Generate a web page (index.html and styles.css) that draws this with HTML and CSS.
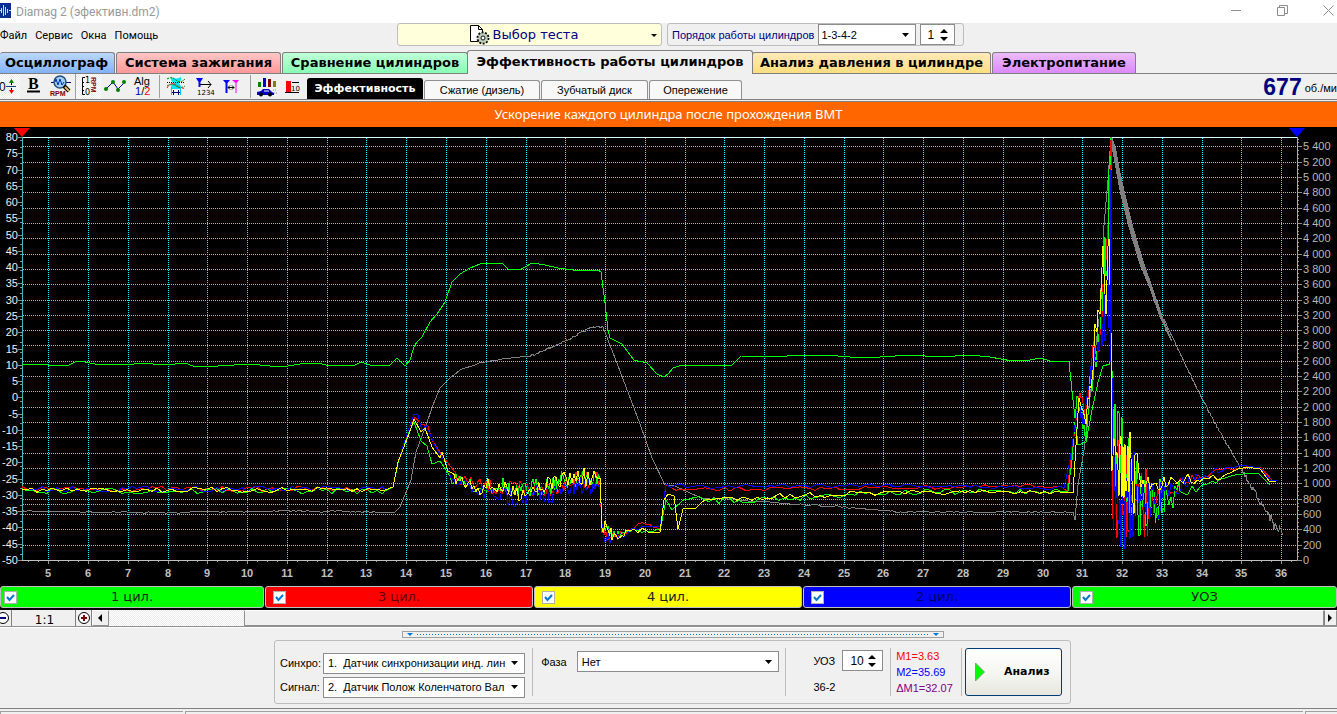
FILE: index.html
```html
<!DOCTYPE html>
<html lang="ru">
<head>
<meta charset="utf-8">
<title>Diamag 2</title>
<link rel="stylesheet" href="styles.css">
</head>
<body>
<div class="app">
  <header class="titlebar">
    <svg class="app-icon" width="11" height="15" viewBox="0 0 11 15" aria-hidden="true">
      <rect width="11" height="15" fill="#0b2f8f"/>
      <path d="M0 7.500h1M1.500 5v5M3.500 2v11M5.500 4v8M7.500 6v4M9 7.500h2" fill="none" stroke="#bfe2ff"/>
    </svg>
    <span class="title">Diamag 2 (эфективн.dm2)</span>
    <button class="win-btn" aria-label="Свернуть"><svg width="11" height="11" viewBox="0 0 11 11"><path d="M0 5.500h10" stroke="#8c8c8c"/></svg></button>
    <button class="win-btn" aria-label="Развернуть"><svg width="11" height="11" viewBox="0 0 11 11"><path d="M.5 2.500h7v8h-7zM2.500 2.500v-2h8v8h-3" fill="none" stroke="#8c8c8c"/></svg></button>
    <button class="win-btn" aria-label="Закрыть"><svg width="11" height="11" viewBox="0 0 11 11"><path d="M.5.5l10 10M10.500.5l-10 10" stroke="#8c8c8c"/></svg></button>
  </header>

  <div class="menu-row">
    <nav class="menu">
      <button>Файл</button><button>Сервис</button><button>Окна</button><button>Помощь</button>
    </nav>
    <button class="test-picker">
      <svg width="21" height="21" viewBox="0 0 21 21" aria-hidden="true">
        <path d="M1.500 1.500h8l4 4v12h-12z" fill="#fff" stroke="#000"/><path d="M9.500 1.500v4h4" fill="none" stroke="#000"/>
        <circle cx="14" cy="14" r="5.500" fill="#b9cdb9" stroke="#111" stroke-width="2" stroke-dasharray="2 1.400"/>
        <circle cx="14" cy="14" r="4.500" fill="#b9cdb9"/><circle cx="14" cy="14" r="2" fill="#fff" stroke="#111"/>
      </svg>
      <span>Выбор теста</span>
      <i class="drop"></i>
    </button>
    <div class="order">
      <label for="order">Порядок работы цилиндров</label>
      <select id="order"><option>1-3-4-2</option></select>
      <span class="spin"><input id="first" type="text" value="1" aria-label="Первый цилиндр"><svg width="8" height="14" viewBox="0 0 8 14"><path d="M0 5l4-4 4 4zM0 9l4 4 4-4z"/></svg></span>
    </div>
  </div>

  <nav class="tabs">
    <button class="tab tab-blue">Осциллограф</button>
    <button class="tab tab-red">Система зажигания</button>
    <button class="tab tab-green">Сравнение цилиндров</button>
    <button class="tab tab-active">Эффективность работы цилиндров</button>
    <button class="tab tab-amber">Анализ давления в цилиндре</button>
    <button class="tab tab-violet">Электропитание</button>
  </nav>

  <div class="toolbar">
    <div class="tools">
      <button class="tool pressed first" aria-label="Нуль"><svg width="20" height="24" viewBox="0 0 20 24"><text x="-1" y="17" class="pix">0</text><path d="M6 12.500h10" stroke="#104080"/><path d="M11.500 7v4M11.500 14v4" stroke="#000"/><path d="M9 9l2.500-4L14 9z" fill="#008000"/><path d="M9 16l2.500 4 2.500-4z" fill="red"/></svg></button>
      <button class="tool" aria-label="Жирный"><svg width="27" height="24" viewBox="0 0 27 24"><text x="8" y="15" class="bold-b">B</text><path d="M7 17.500h13" stroke="#000" stroke-width="2"/></svg></button>
      <button class="tool" aria-label="Обороты"><svg width="28" height="24" viewBox="0 0 28 24"><path d="M4 8.500h20" stroke="#000080"/><circle cx="13" cy="8" r="6" fill="#9fd0f4" stroke="#285080" stroke-width="1.500"/><path d="M8 8l1-3 2 6 2-6 2 6 2-3" fill="none" stroke="#0030b0"/><path d="M17 12l5 5" stroke="#000" stroke-width="4"/><path d="M18 13l4 4" stroke="#e8c060" stroke-width="2"/><text x="3" y="22" class="rpm">RPM</text></svg></button>
      <button class="tool pressed" aria-label="Шкала оборотов"><svg width="25" height="24" viewBox="0 0 25 24"><path d="M9 3.500H6.500v17H9M6 8.500h2M6 12.500h2M6 16.500h2" fill="none" stroke="#000"/><text x="9" y="9" class="tiny">1</text><text x="9" y="21" class="tiny">0</text><text class="rpm" transform="translate(15 3) rotate(90)">RPM</text></svg></button>
      <button class="tool" aria-label="Точки"><svg width="28" height="24" viewBox="0 0 28 24"><path d="M5 15l7-7 5 7 7-7" fill="none" stroke="#0000a0"/><g fill="#008000"><circle cx="5" cy="15" r="2"/><circle cx="12" cy="8" r="2"/><circle cx="17" cy="16" r="2"/><circle cx="23" cy="8" r="2"/></g></svg></button>
      <button class="tool" aria-label="Алгоритм"><svg width="28" height="24" viewBox="0 0 28 24"><text x="5" y="11" class="alg">Alg</text><text x="6" y="21" class="alg"><tspan fill="#0000a0">1</tspan>/<tspan fill="red">2</tspan></text></svg></button>
      <i class="sep"></i>
      <button class="tool" aria-label="Наложение"><svg width="32" height="24" viewBox="0 0 32 24"><path d="M9 3q5 3 10 0v3l-2 3 2 3v3H9v-3l2-3-2-3z" fill="#00e5f0"/><path d="M5 5q5-3 9 1t9-1M5 12q5-3 9 0t9 0" fill="none" stroke="#008000" stroke-dasharray="2 1"/><path d="M5 8.500h18" stroke="#000" stroke-dasharray="1 1"/><path d="M5 14q4-7 9-3t9 3" fill="none" stroke="red" stroke-dasharray="2 1"/><path d="M9.500 13v8M18.500 13v8" stroke="#00c8e0"/><path d="M10 18.500h8M11.500 16v5M16.500 16v5" stroke="#000080"/></svg></button>
      <button class="tool" aria-label="Метки цилиндров"><svg width="28" height="24" viewBox="0 0 28 24"><path d="M2 4h7L6.500 8v5h-2V8z" fill="#00f"/><path d="M6 10.500h11" stroke="#000"/><path d="M14 7l3 3.500-3 3.500" fill="none" stroke="#000"/><text x="3" y="21" class="count">1234</text></svg></button>
      <button class="tool" aria-label="Между метками"><svg width="26" height="24" viewBox="0 0 26 24"><path d="M1 6h7L5.500 9v10h-2V9z" fill="#00f"/><path d="M10 6h7l-2.500 3v10h-1V9z" fill="#f0f"/><path d="M6 13.500h6M8 11.500l-2 2 2 2M10 11.500l2 2-2 2" fill="none" stroke="#000"/></svg></button>
      <i class="sep"></i>
      <button class="tool" aria-label="Автомобиль"><svg width="28" height="24" viewBox="0 0 28 24"><path d="M5 8h3v5H5z" fill="#008000"/><path d="M10 4h3v9h-3z" fill="#0000c0"/><path d="M15 5h3v8h-3z" fill="#800000"/><path d="M20 7h3v6h-3z" fill="#808000"/><path d="M4 18l4-1 2-2h6l3 3 2 1v2H4z" fill="#0000c8"/><path d="M11 17h5" stroke="#fff"/><circle cx="8" cy="20.500" r="2"/><circle cx="17" cy="20.500" r="2"/><path d="M20 16h4M21 19h3" stroke="#909090" stroke-dasharray="1 1"/></svg></button>
      <button class="tool" aria-label="Десять"><svg width="24" height="24" viewBox="0 0 24 24"><path d="M5 7h5v11H5z" fill="red"/><path d="M4 18.500h14M11 8.500h7" stroke="#000"/><text x="10" y="17" class="count">10</text></svg></button>
    </div>
    <nav class="subtabs">
      <button class="sub sub-active">Эффективность</button>
      <button class="sub">Сжатие (дизель)</button>
      <button class="sub">Зубчатый диск</button>
      <button class="sub">Опережение</button>
    </nav>
    <div class="rpm-read"><strong>677</strong><span>об./мин</span></div>
  </div>

  <h1 class="banner">Ускорение каждого цилиндра после прохождения ВМТ</h1>

  <main class="scope">
    <svg id="chart" class="chart" viewBox="0 127 1337 458" role="img" aria-label="Ускорение цилиндров"></svg>
    <div class="channels">
      <label class="ch ch-green"><input type="checkbox" checked><span>1 цил.</span></label>
      <label class="ch ch-red"><input type="checkbox" checked><span>3 цил.</span></label>
      <label class="ch ch-yellow"><input type="checkbox" checked><span>4 цил.</span></label>
      <label class="ch ch-blue"><input type="checkbox" checked><span>2 цил.</span></label>
      <label class="ch ch-green"><input type="checkbox" checked><span>УОЗ</span></label>
    </div>
  </main>

  <div class="scroll-row">
    <button class="zoom zoom-out" aria-label="Уменьшить"><svg width="14" height="14" viewBox="0 0 14 14"><circle cx="7" cy="7" r="5.500" fill="#fff" stroke="#000"/><path d="M4 7h6" stroke="#000080" stroke-width="2"/></svg></button>
    <output class="ratio">1:1</output>
    <button class="zoom" aria-label="Увеличить"><svg width="14" height="14" viewBox="0 0 14 14"><circle cx="7" cy="7" r="5.500" fill="#fff" stroke="#000"/><path d="M4 7h6M7 4v6" stroke="#800000" stroke-width="2"/></svg></button>
    <button class="arrow" aria-label="Влево"><svg width="5" height="8" viewBox="0 0 5 8"><path d="M4 0v8L0 4z"/></svg></button>
    <div class="track"><div class="thumb"></div></div>
    <button class="arrow arrow-right" aria-label="Вправо"><svg width="5" height="8" viewBox="0 0 5 8"><path d="M0 0v8l4-4z"/></svg></button>
  </div>

  <section class="bottom">
    <div class="splitter"><i></i><b></b><i></i></div>
    <form class="panel">
      <div class="sources">
        <label for="sync">Синхро:</label>
        <select id="sync"><option>1.&nbsp; Датчик синхронизации инд. лин</option></select>
        <label for="signal">Сигнал:</label>
        <select id="signal"><option>2.&nbsp; Датчик Полож Коленчатого Вал</option></select>
      </div>
      <div class="phase">
        <label for="phase">Фаза</label>
        <select id="phase"><option>Нет</option></select>
      </div>
      <div class="timing">
        <label for="uoz">УОЗ</label>
        <span class="spin"><input id="uoz" type="text" value="10"><svg width="8" height="14" viewBox="0 0 8 14"><path d="M0 5l4-4 4 4zM0 9l4 4 4-4z"/></svg></span>
        <span class="disc">36-2</span>
      </div>
      <div class="marks">
        <span class="m1">М1=3.63</span>
        <span class="m2">М2=35.69</span>
        <span class="dm">ΔМ1=32.07</span>
      </div>
      <div class="run">
        <button type="button" class="analyze"><svg width="11" height="20" viewBox="0 0 11 20"><path d="M.5 1v18l9-9z" fill="#0f0" stroke="#80a080"/></svg><span>Анализ</span></button>
      </div>
    </form>
  </section>
  <footer class="status"><span></span><span></span><span></span></footer>
</div>
<script src="chart.js"></script>
</body>
</html>
```
FILE: styles.css
```css
* { box-sizing: border-box; }
body { margin: 0; overflow-x: hidden; background: #f0f0f0; color: #000; font: 11px/14px "Liberation Sans", Arial, sans-serif; }
button, input, select { font: inherit; color: inherit; margin: 0; padding: 0; border: 0; border-radius: 0; background: none; }
.app { display: flex; flex-direction: column; min-height: 100vh; overflow: hidden; }

.titlebar { display: flex; align-items: center; height: 23px; padding-bottom: 2px; background: #fff; color: #999; font: 12px/16px Roboto, sans-serif; }
.title { flex: 1; padding: 2px 0 0 5px; }
.win-btn { width: 46px; height: 20px; display: flex; align-items: center; justify-content: center; }
.win-btn:last-child { width: 32px; padding-left: 14px; }

.menu-row { display: flex; align-items: flex-start; height: 27px; gap: 5px; }
.menu { flex: 0 0 392px; display: flex; gap: 8px; padding-top: 5px; font: 11px/16px Roboto, sans-serif; }
.test-picker { flex: 0 0 265px; height: 23px; display: flex; align-items: center; justify-content: center; gap: 3px; border: 1px solid #bdbdbd; border-radius: 3px; background: #ffffdc; color: #000080; font: 13px/18px "DejaVu Sans", sans-serif; position: relative; }
.test-picker span { padding-right: 12px; }
.drop { position: absolute; right: 4px; top: 10px; border: 3px solid transparent; border-top-color: #000; border-bottom: 0; }
.order { height: 23px; display: flex; align-items: center; gap: 4px; padding: 0 8px 0 4px; border: 1px solid #bdbdbd; border-radius: 3px; color: #000080; }
.order select { width: 98px; height: 21px; padding-left: 2px; }
.order label { white-space: nowrap; }
select { appearance: none; height: 21px; padding: 0 16px 0 4px; border: 1px solid #8c8c8c; color: #000; background: #fff url("data:image/svg+xml,%3Csvg xmlns='http://www.w3.org/2000/svg' width='7' height='4'%3E%3Cpath d='M0 0h7L3.500 4z'/%3E%3C/svg%3E") no-repeat right 6px center; text-overflow: clip; }
.spin { display: inline-flex; align-items: center; width: 35px; height: 21px; border: 1px solid #8c8c8c; background: #fff; color: #000; }
.spin input { flex: 1; min-width: 0; padding-left: 6px; font-size: 12px; }
.spin svg { flex: none; margin-right: 6px; }

.tabs { display: flex; align-items: flex-end; height: 24px; gap: 1px; border-bottom: 1px solid #808080; }
.tab { height: 21px; padding: 0 4px; border: 1px solid #808080; border-bottom: 0; border-radius: 3px 3px 0 0; font: bold 13px/18px "DejaVu Sans", sans-serif; white-space: nowrap; }
.tab-blue { width: 115px; padding: 0 0 0 5px; border-left: 0; background: linear-gradient(#bcd8ff, #82b2fa); text-align: left; }
.tab-red { width: 165px; background: linear-gradient(#ffc6c6, #ff9898); }
.tab-green { width: 186px; background: linear-gradient(#c0ffd8, #88ffb4); }
.tab-active { width: 286px; height: 24px; margin: 0 -2px -1px; padding-bottom: 2px; background: #f0f0f0; }
.tab-amber { width: 239px; background: linear-gradient(#ffeab8, #ffde80); }
.tab-violet { width: 144px; background: linear-gradient(#ecbcff, #dc88ff); }

.toolbar { display: flex; align-items: flex-end; height: 26px; border-bottom: 1px solid #808080; }
.tools { display: flex; align-items: center; width: 307px; height: 25px; }
.tool { display: flex; height: 25px; }
.pressed { background: repeating-conic-gradient(#fff 0 25%, #ececec 0 50%) 0 0 / 2px 2px; border-left: 1px solid #a0a0a0; }
.first { border-left: 0; }
.sep { width: 1px; height: 23px; background: #a0a0a0; margin: 0 2px; }
.pix { font: 12px "Liberation Sans", sans-serif; }
.bold-b { font: bold 16px "Liberation Serif", serif; }
.rpm { font: bold 7px "Liberation Sans", sans-serif; fill: #800000; }
.tiny { font: 8px "DejaVu Sans", sans-serif; }
.count { font: 7px "DejaVu Sans", sans-serif; }
.alg { font: 11px "Liberation Sans", sans-serif; }
.subtabs { display: flex; align-items: flex-end; gap: 1px; }
.sub { height: 19px; border: 1px solid #909090; border-bottom: 0; border-radius: 3px 3px 0 0; background: #f8f8f8; white-space: nowrap; }
.sub:nth-child(1) { width: 116px; }
.sub:nth-child(2) { width: 116px; }
.sub:nth-child(3) { width: 107px; }
.sub:nth-child(4) { width: 93px; }
.sub-active { height: 21px; background: #000; color: #fff; font: bold 11px/16px "DejaVu Sans", sans-serif; border-color: #000; }
.rpm-read { flex: 1; display: flex; justify-content: flex-end; align-items: center; gap: 3px; height: 25px; margin-right: -6px; white-space: nowrap; }
.rpm-read strong { color: #000080; font-size: 23px; line-height: 24px; }
.rpm-read span { padding-top: 3px; }

.banner { margin: 1px 0 0; border-top: 1px solid #808080; height: 26px; background: #f60; color: #fff; text-align: center; font: 13px/24px "Noto Sans", sans-serif; }

.scope { background: #000; padding-bottom: 2px; }
.chart { display: block; width: 100%; height: auto; }
.chart .left { font: 11px "Liberation Sans", sans-serif; fill: #f0f0f0; text-anchor: end; }
.chart .right { font: 11px "Liberation Sans", sans-serif; fill: #b8b8b8; }
.chart .bottom-num { font: bold 11px "Liberation Sans", sans-serif; fill: #c0c0c0; text-anchor: middle; }
.channels { display: grid; grid-template-columns: 264fr 268fr 268fr 268fr 265fr; gap: 1px; padding-top: 1px; }
.ch { display: grid; grid-template-columns: 13px 1fr 13px; align-items: center; height: 22px; padding: 0 7px; border: 1px solid #c0c0c0; border-radius: 3px; font: 13px/18px "DejaVu Sans", sans-serif; color: #202020; text-align: center; }
.ch:first-child { padding: 0 3px; }
.ch-green { background: #0f0; }
.ch-red { background: #f00; color: #600; }
.ch-yellow { background: #ff0; }
.ch-blue { background: #00f; color: #000060; }
.ch input { appearance: none; width: 13px; height: 13px; border: 1px solid #b0b0b0; background: #fff url("data:image/svg+xml,%3Csvg xmlns='http://www.w3.org/2000/svg' width='11' height='11'%3E%3Cpath d='M2 5l2.500 3L9 3' fill='none' stroke='%230078d7' stroke-width='2'/%3E%3C/svg%3E") center no-repeat; }

.scroll-row { display: flex; height: 17px; border-bottom: 1px solid #909090; box-shadow: 0 1px #fff; }
.zoom { width: 16px; border-right: 1px solid #808080; display: flex; align-items: center; justify-content: center; }
.zoom svg { flex: none; }
.zoom-out { width: 12px; justify-content: flex-end; padding-right: 1px; }
.ratio { width: 64px; border-right: 1px solid #808080; padding-left: 2px; font: 12px/20px "DejaVu Sans", sans-serif; text-align: center; }
.arrow { width: 17px; display: flex; align-items: center; justify-content: center; border: 1px solid #909090; border-top-color: #fff; border-left-color: #fff; }
.arrow-right { border-left-color: #808080; width: 13px; }
.track { flex: 1; padding-left: 135px; background: repeating-conic-gradient(#fff 0 25%, #ececec 0 50%) 0 0 / 2px 2px; }
.thumb { height: 16px; background: #f0f0f0; border: 1px solid #909090; border-top-color: #fff; }

.bottom { flex: 1; display: flex; flex-direction: column; align-items: center; padding: 4px 0 4px 8px; gap: 2px; }
.splitter { width: 542px; height: 7px; display: flex; align-items: center; gap: 4px; padding: 0 4px; border: 1px solid #a0a0a0; }
.splitter b { flex: 1; height: 1px; background: repeating-linear-gradient(90deg, #0078d7 0 1px, transparent 1px 3px); }
.splitter i { border: 3px solid transparent; border-top-color: #0078d7; border-bottom: 0; }
.panel { width: 797px; height: 64px; display: flex; align-items: center; padding: 0 8px 0 5px; border: 1px solid #bdbdbd; border-radius: 3px; }
.panel > div + div { border-left: 1px solid #bdbdbd; height: 48px; }
.panel label { white-space: nowrap; }
.sources { width: 253px; display: grid; grid-template-columns: 43px 202px; row-gap: 3px; align-items: center; padding-top: 6px; }
.sources select { width: 202px; }
.phase { width: 254px; display: flex; align-items: flex-start; gap: 10px; padding: 3px 0 0 8px; }
.phase label { line-height: 22px; }
.phase select { width: 202px; }
.timing { width: 105px; display: grid; grid-template-columns: 28px 41px; column-gap: 1px; align-content: start; row-gap: 4px; padding: 2px 0 0 27px; line-height: 22px; }
.timing .spin { width: 41px; }
.timing .spin input { padding-left: 7px; }
.disc { grid-column: 1 / 3; }
.marks { width: 71px; padding-left: 5px; display: flex; flex-direction: column; line-height: 16px; white-space: nowrap; }
.m1 { color: #f00; }
.m2 { color: #00f; }
.dm { color: #800080; }
.run { padding-left: 3px; display: flex; align-items: center; }
.analyze { width: 97px; height: 48px; display: flex; align-items: center; gap: 18px; padding-left: 9px; border: 1px solid #003c74; border-radius: 3px; background: linear-gradient(#fff, #f4f4ef 60%, #e6e6de); font: bold 11px/16px "DejaVu Sans", sans-serif; }

.status { display: flex; gap: 2px; height: 6px; padding-top: 2px; border-top: 1px solid #808080; }
.status span { border-top: 1px solid #a0a0a0; border-left: 1px solid #a0a0a0; }
.status span:nth-child(1) { flex: 0 0 183px; }
.status span:nth-child(2) { flex: 1; }
.status span:nth-child(3) { flex: 0 0 32px; }
```
FILE: chart.js
```js
(function () {
  const NS = "http://www.w3.org/2000/svg";
  const svg = document.getElementById("chart");
  const L = 22, R = 1297, T = 137, B = 560;

  function add(name, attrs, text) {
    const el = document.createElementNS(NS, name);
    for (const key in attrs) el.setAttribute(key, attrs[key]);
    if (text !== undefined) el.textContent = text;
    svg.appendChild(el);
  }
  function line(d, stroke, dash) {
    const a = { d: d, stroke: stroke, fill: "none", "shape-rendering": "crispEdges" };
    if (dash) a["stroke-dasharray"] = dash;
    add("path", a);
  }
  const rpmY = v => Math.round(B - v * 0.07661);
  const pctY = v => Math.round(T + (80 - v) * 3.254);
  const timeX = v => Math.round(48.3 + (v - 5) * 39.77);

  let grid = `M${L + 1} 504.500H${R}`;
  for (let v = 200; v <= 5400; v += 200) grid += `M${L + 1} ${rpmY(v) + 0.5}H${R}`;
  for (let v = 5; v <= 36; v++) grid += `M${timeX(v) + 0.5} ${T + 1}V${B}`;
  line(grid, "#00ffff", "1 1");

  let ticks = "";
  for (let i = 0; i <= 130; i++) {
    const y = pctY(80 - i) + 0.5;
    if (i % 5 === 0) ticks += `M18 ${y}H${L}`;
    else if (i % 5 % 2 === 1) ticks += `M20 ${y}H${L}`;
  }
  for (let v = 0; v <= 5500; v += 50) ticks += `M${R} ${rpmY(v) + 0.5}h${v % 200 ? 2 : 5}`;
  for (let i = -2; i <= 125; i++) {
    ticks += `M${timeX(5 + i / 4) + 0.5} ${B}v${i % 4 ? 2 : 4}`;
  }
  line(ticks, "#909090");
  line(`M${L} ${T + 0.5}H${R}`, "#d8ffff");
  line(`M${L} ${B + 0.5}H${R}`, "#c0c0c0");
  line(`M${L + 0.5} ${T}V${B}`, "#40b8b8");
  line(`M${R + 0.5} ${T}V${B}`, "#b8b848");

  for (let v = 80; v >= -50; v -= 5) add("text", { x: 18, y: pctY(v) + 4, class: "left" }, v);
  for (let v = 0; v <= 5400; v += 200) {
    const s = v >= 1000 ? Math.floor(v / 1000) + " " + String(v % 1000).padStart(3, "0") : v;
    add("text", { x: 1303, y: rpmY(v) + 4, class: "right" }, s);
  }
  for (let v = 5; v <= 36; v++) add("text", { x: timeX(v), y: 577, class: "bottom-num" }, v);

  let seed = 7;
  function rand() {
    seed = (seed * 16807) % 2147483647;
    return seed / 2147483647 * 2 - 1;
  }
  /* Keys are [x, y, spread, step]; spread and step hold up to the next key. */
  function trace(keys, color) {
    let d = "";
    for (let i = 0; i < keys.length - 1; i++) {
      const [x0, y0, spread = 0, step = 4] = keys[i];
      const [x1, y1] = keys[i + 1];
      for (let x = x0; x < x1; x += spread ? step : x1 - x0) {
        const y = y0 + (y1 - y0) * (x - x0) / (x1 - x0) + rand() * spread;
        d += (d ? "L" : "M") + x.toFixed(1) + " " + Math.min(558, y).toFixed(1);
      }
    }
    const last = keys[keys.length - 1];
    line(d + `L${last[0]} ${last[1]}`, color);
  }

  /* Thick part of the engine speed curve, narrowing as the speed falls. */
  add("path", { d: "M1110 137h2l4 11 4 23 5 22 8 33 11 37 9 25 10 30 9 22-1 1-11-23-11-31-10-24-11-38-8-32-6-33-3-17z", fill: "#808080", "shape-rendering": "crispEdges" });
  trace([[22,511,.8,3],[180,513],[190,512,.8,3],[290,511,.8,3],[375,512],[395,512],[400,507],[405,495],[411,480],[416,452],[425,428],[433,405],[440,388],[450,378],[460,370,.6,2],[480,363,.6,2],[500,359,.6,2],[530,356,1,1],[555,346,1,1],[575,336,1,1],[592,327,1,1],[603,327],[608,340],[620,371],[640,424],[652,458],[665,485],[675,486],[690,493],[702,498,1,3],[740,500,1,3],[800,504,1,3],[860,508,.8,3],[900,512,.7,3],[1073,512],[1075,520],[1078,485],[1084,450],[1092,380],[1100,310],[1104,225],[1108,180],[1111,137],[1113,148],[1120,182],[1131,225],[1142,264],[1152,287],[1163,318,1,1],[1181,355,1,1],[1200,395,1,1],[1222,436,1,1],[1240,466,3,1],[1255,493,4,.8],[1270,517,7,.8],[1282,535]], "#808080");

  trace([[22,364],[30,365],[37,364],[48,365],[69,365],[75,362],[80,361],[95,364],[128,365],[140,363],[165,365],[185,363],[193,366],[218,366],[250,364],[270,366],[288,366],[300,364],[318,363],[330,366],[345,365],[355,365],[361,362],[370,365],[390,365],[397,358],[405,366],[410,360],[414,347],[417,342],[422,337],[430,322],[437,314],[445,302],[452,282],[460,274],[470,268],[480,264],[487,263],[502,263],[508,269],[521,269],[527,266],[532,263],[545,265],[558,268],[573,270],[598,270],[601,272],[605,303],[608,330],[610,338],[622,344],[634,360],[647,363],[657,374],[664,377],[668,374],[673,368],[682,365],[732,365],[741,356],[775,357],[800,355],[825,355],[850,357],[880,357],[910,355],[940,357],[970,355],[990,357],[1012,361],[1030,360],[1040,358],[1050,361],[1069,362],[1073,400],[1078,445],[1086,442],[1092,410],[1098,382],[1103,366],[1110,364],[1111,138]], "#00ff00");

  const early = (o, s) => [[22,490+o,s,5],[385,490+o],[393,487]];
  trace(early(-1, 2.5).concat([[398,463],[409,428],[415,417],[421,424],[428,426],[432,440],[440,452],[447,462],[455,476,6,2],[478,486,8,2],[520,490,11,1.500],[540,489,10,1.500],[570,481,9,1.500],[600,480],[602,530,8,1.500],[607,541,5,1.500],[618,536,4,2],[630,531,2,4],[642,523,1,4],[660,528],[666,487,3,5],[680,490,2,5],[1060,486],[1067,491],[1071,460],[1079,390,8,1],[1085,420],[1090,380,18,1],[1098,335,25,1],[1104,300,45,1],[1110,175],[1111,140],[1112,480,52,1],[1128,505,38,1.500],[1150,505,15,2],[1165,490,7,3],[1200,478,3,4],[1220,470,1,4],[1250,467],[1261,468],[1274,482]]), "#ff0000");
  trace(early(1, 3).concat([[398,463],[409,432],[414,422],[421,441],[427,446],[432,464],[440,461],[450,478,6,2],[478,488,8,2],[500,484,10,1.500],[515,494,9,1.500],[530,489,10,1.500],[570,479,11,1.500],[600,479],[602,526,7,1.500],[612,535,4,2],[630,531,2,4],[660,531],[666,500],[672,510],[684,500,4,5],[780,499,3,5],[860,493,3,5],[1060,491],[1068,491],[1072,460],[1077,398,8,1],[1086,435,9,1],[1090,390,18,1],[1098,345,25,1],[1104,280,45,1],[1111,165],[1112,380,30,1],[1116,450,50,1],[1130,490,38,1],[1148,505,24,1.500],[1165,500,14,2],[1180,494,5,4],[1200,487,3,4],[1222,479,1,4],[1245,473],[1258,473],[1270,485]]), "#00ff00");
  trace(early(-1, 3).concat([[398,462],[409,428],[414,414],[418,415],[422,431],[426,425],[435,446],[445,462],[452,477,6,2],[478,492,8,2],[505,496,11,1.500],[540,496,10,1.500],[565,490,10,1.500],[600,484],[602,532,9,1.500],[612,537,4,2],[630,531,2,4],[645,526],[660,527],[666,486,3,5],[690,487,2,5],[870,485,2,5],[1064,488],[1070,460],[1078,405,8,1],[1085,423,10,1],[1090,370,22,1],[1100,330,30,1],[1105,300,45,1],[1109,300,45,1],[1111,170],[1111.500,400,120,1],[1118,505,50,1],[1136,500,26,1.500],[1165,492,8,2],[1190,480,4,3],[1218,471,2,4],[1240,465],[1260,468],[1270,480],[1278,481]]), "#0000ff");
  trace(early(0, 2.5).concat([[398,462],[409,434],[414,419],[421,432],[425,428],[432,447],[440,458],[442,452],[448,471],[454,478,6,2],[478,487,8,2],[495,486,8,2],[515,493,9,2],[540,486,8,2],[570,478,10,2],[600,478],[602,528,10,1.500],[612,536,5,2],[630,531,3,4],[645,531,2,4],[660,532],[664,500],[668,494],[674,496],[678,529],[683,509],[696,508],[702,500,3,5],[780,496,3,5],[880,493,2,5],[1060,492],[1073,493],[1079,393,5,1],[1086,428,10,1],[1091,375,15,2],[1098,310],[1100,300,25,2],[1103,246],[1104,290,45,2],[1109,280,45,2],[1111,330],[1112,460,30,1],[1118,465,42,1],[1135,475,24,2],[1148,483,9,2],[1168,482,5,3],[1185,478,5,3],[1205,480,4,4],[1222,476,1,4],[1245,467],[1260,469],[1270,482],[1276,481]]), "#ffff00");
  line("M1110.500 170V362", "#0000ff");

  add("path", { d: "M14 128h16l-8 9z", fill: "#f00" });
  add("path", { d: "M1289 128h16l-8 9z", fill: "#00f" });
})();
```
